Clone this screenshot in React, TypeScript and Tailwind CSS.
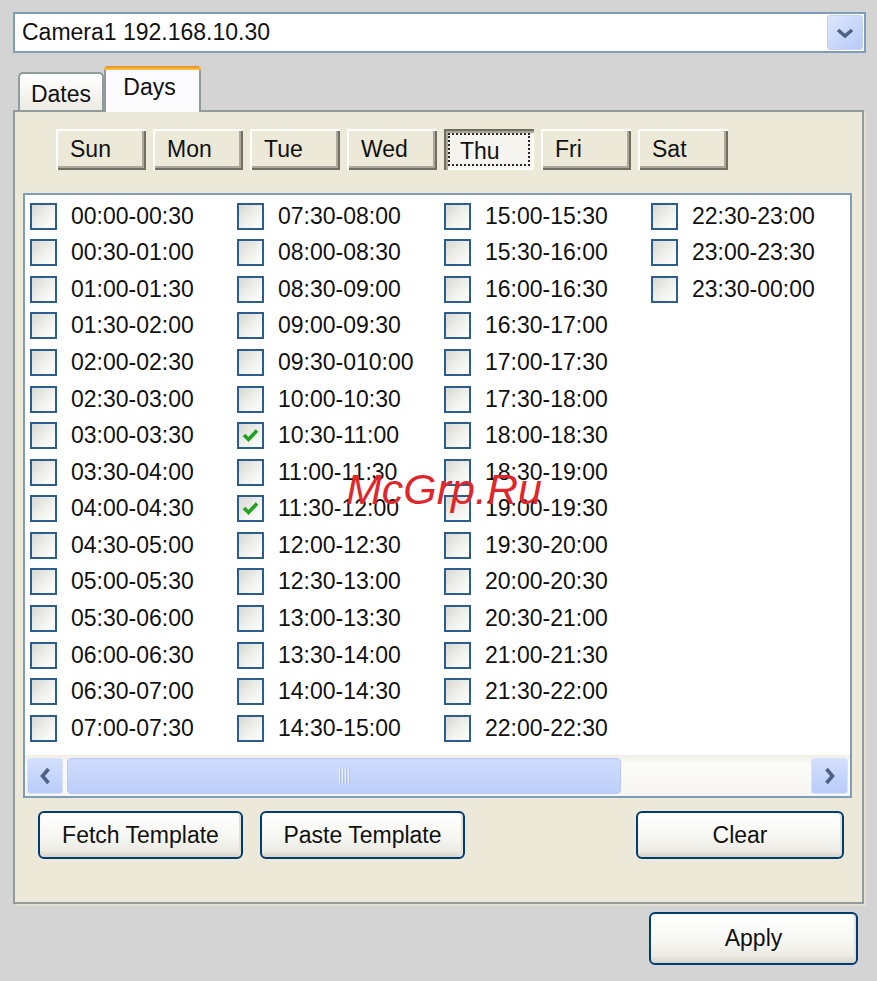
import React from 'react';

const DAYS = ['Sun', 'Mon', 'Tue', 'Wed', 'Thu', 'Fri', 'Sat'];
const CHECKED = [21, 23];

const pad = (n: number) => String(n).padStart(2, '0');
const fmt = (m: number) => `${pad(Math.floor(m / 60) % 24)}:${pad(m % 60)}`;

// 48 half-hour slots; the original list has a typo on 09:30
const SLOTS = Array.from({ length: 48 }, (_, i) =>
  i === 19 ? '09:30-010:00' : `${fmt(i * 30)}-${fmt(i * 30 + 30)}`
);

const Chevron: React.FC<{ dir: 'down' | 'left' | 'right' }> = ({ dir }) => {
  if (dir === 'down')
    return (
      <svg width="20" height="12" viewBox="0 0 20 12">
        <path d="M3 3 L10 9 L17 3" fill="none" stroke="#4d6185" strokeWidth="3.6" />
      </svg>
    );
  return (
    <svg width="12" height="20" viewBox="0 0 12 20" className={dir === 'right' ? 'rotate-180' : ''}>
      <path d="M9.5 3 L3.5 10 L9.5 17" fill="none" stroke="#4d6185" strokeWidth="3.6" />
    </svg>
  );
};

const CheckBox: React.FC<{ checked?: boolean }> = ({ checked }) => (
  <div className="w-[27px] h-[27px] shrink-0 border-2 border-[#2b5d8e] bg-[linear-gradient(135deg,#d9d9d3_0%,#f2f2ef_60%,#ffffff_100%)] flex items-center justify-center">
    {checked && (
      <svg width="19" height="17" viewBox="0 0 19 17">
        <path d="M3 8 L7.5 12.5 L16 3.5" fill="none" stroke="#21a121" strokeWidth="3.6" />
      </svg>
    )}
  </div>
);

const XpButton: React.FC<{ label: string; className: string }> = ({ label, className }) => (
  <button
    className={`${className} shrink-0 border-2 border-[#003c74] rounded-[6px] bg-[linear-gradient(180deg,#ffffff_0%,#f6f6f2_55%,#ecebe4_85%,#d8d3c8_100%)] shadow-[inset_-2px_0_0_#e4e1d7] flex items-center justify-center text-[23px] text-[#111]`}
  >
    {label}
  </button>
);

const DayButton: React.FC<{ label: string; pressed?: boolean }> = ({ label, pressed }) => (
  <button
    className={`w-[90px] h-[41px] p-[4px] ${
      pressed
        ? 'bg-[#f5f4ef] shadow-[inset_2px_2px_0_#716f64,inset_4px_4px_0_#aca899,inset_-2px_-2px_0_#ffffff]'
        : 'bg-[#ece9d8] shadow-[inset_2px_2px_0_#ffffff,inset_-2px_-2px_0_#716f64,inset_-4px_-4px_0_#aca899]'
    }`}
  >
    <div
      className={`h-full flex items-center text-[23px] text-[#111] border-2 ${
        pressed ? 'border-dotted border-[#2a2a2a] pl-[10px] pt-[3px]' : 'border-transparent pl-[8px]'
      }`}
    >
      {label}
    </div>
  </button>
);

export default function App() {
  return (
    <div className="relative w-[877px] h-[981px] bg-[#d4d4d4] pt-[12px] px-[13px] flex flex-col font-['Liberation_Sans',Arial,sans-serif] leading-none text-[#111] overflow-hidden">
      {/* camera combo */}
      <div className="w-[853px] h-[41px] shrink-0 border-2 border-[#7f9db9] bg-white flex items-center justify-between pl-[7px] pr-[1px]">
        <span className="text-[23px]">Camera1 192.168.10.30</span>
        <div className="w-[36px] h-[35px] rounded-[3px] border border-[#c3d2f6] bg-[linear-gradient(135deg,#dde6fd,#b7caf7)] flex items-center justify-center">
          <Chevron dir="down" />
        </div>
      </div>

      {/* tabs */}
      <div className="mt-[13px] h-[44px] shrink-0 flex items-end pl-[5px]">
        <div className="w-[86px] h-[38px] border-2 border-b-0 border-[#919b9c] rounded-t-[5px] bg-[linear-gradient(180deg,#ffffff,#ecebe5)] flex items-center justify-center pt-[4px] text-[23px]">
          Dates
        </div>
        <div className="relative z-10 w-[97px] h-[46px] -mb-[2px] border-2 border-b-0 border-t-0 border-[#919b9c] rounded-t-[5px] bg-[#fcfcfe] flex flex-col">
          <div className="h-[4px] -mx-[2px] rounded-t-[5px] bg-[linear-gradient(180deg,#e68b2c,#ffc83c)]" />
          <div className="flex-1 flex items-center justify-center pb-[8px] pr-[6px] text-[23px]">Days</div>
        </div>
      </div>

      {/* tab panel */}
      <div className="w-[851px] h-[794px] shrink-0 border-2 border-[#919b9c] bg-[#ece9d8] shadow-[2px_2px_0_0_#e2dfd2] flex flex-col">
        <div className="mt-[17px] ml-[41px] flex gap-[7px]">
          {DAYS.map(d => (
            <DayButton key={d} label={d} pressed={d === 'Thu'} />
          ))}
        </div>

        <div className="mt-[23px] ml-[8px] w-[829px] h-[605px] border-2 border-[#7f9db9] bg-white flex flex-col overflow-hidden">
          <div className="flex-1 overflow-hidden pt-[3px] pl-[5px]">
            <div className="grid grid-flow-col grid-rows-[repeat(15,36.57px)] grid-cols-[repeat(4,207px)]">
              {SLOTS.map((s, i) => (
                <div key={s} className="flex items-center gap-[14px]">
                  <CheckBox checked={CHECKED.includes(i)} />
                  <span className="text-[23px] whitespace-nowrap">{s}</span>
                </div>
              ))}
            </div>
          </div>

          {/* horizontal scrollbar */}
          <div className="h-[41px] shrink-0 bg-[linear-gradient(180deg,#eeede5,#fbfbf8_20%,#f7f6f1)] flex items-center px-[2px] gap-[4px]">
            <div className="w-[36px] h-[36px] rounded-[3px] border border-[#d8e2fb] bg-[linear-gradient(180deg,#d3dffd,#b9ccf8)] flex items-center justify-center">
              <Chevron dir="left" />
            </div>
            <div className="w-[554px] h-[36px] rounded-[4px] border border-[#b7c9f4] bg-[linear-gradient(180deg,#cfdcfd,#bccff9)] flex items-center justify-center">
              <svg width="12" height="14" viewBox="0 0 12 14">
                {[1, 4, 7, 10].map(x => (
                  <rect key={x} x={x} y="0" width="1.4" height="14" fill="#eef3fe" />
                ))}
                {[2.4, 5.4, 8.4, 11.4].map(x => (
                  <rect key={x} x={x} y="0" width="0.6" height="14" fill="#8fa9e4" />
                ))}
              </svg>
            </div>
            <div className="flex-1" />
            <div className="w-[37px] h-[36px] rounded-[3px] border border-[#d8e2fb] bg-[linear-gradient(180deg,#d3dffd,#b9ccf8)] flex items-center justify-center">
              <Chevron dir="right" />
            </div>
          </div>
        </div>

        <div className="mt-[13px] ml-[23px] mr-[18px] flex gap-[17px]">
          <XpButton label="Fetch Template" className="w-[205px] h-[48px]" />
          <XpButton label="Paste Template" className="w-[205px] h-[48px]" />
          <div className="flex-1" />
          <XpButton label="Clear" className="w-[208px] h-[48px]" />
        </div>
      </div>

      <div className="mt-[8px] mr-[6px] self-end">
        <XpButton label="Apply" className="w-[209px] h-[53px]" />
      </div>

      {/* watermark */}
      <span className="absolute left-[346px] top-[468px] text-[43px] italic text-[#e0262a] leading-none pointer-events-none">
        McGrp.Ru
      </span>
    </div>
  );
}
